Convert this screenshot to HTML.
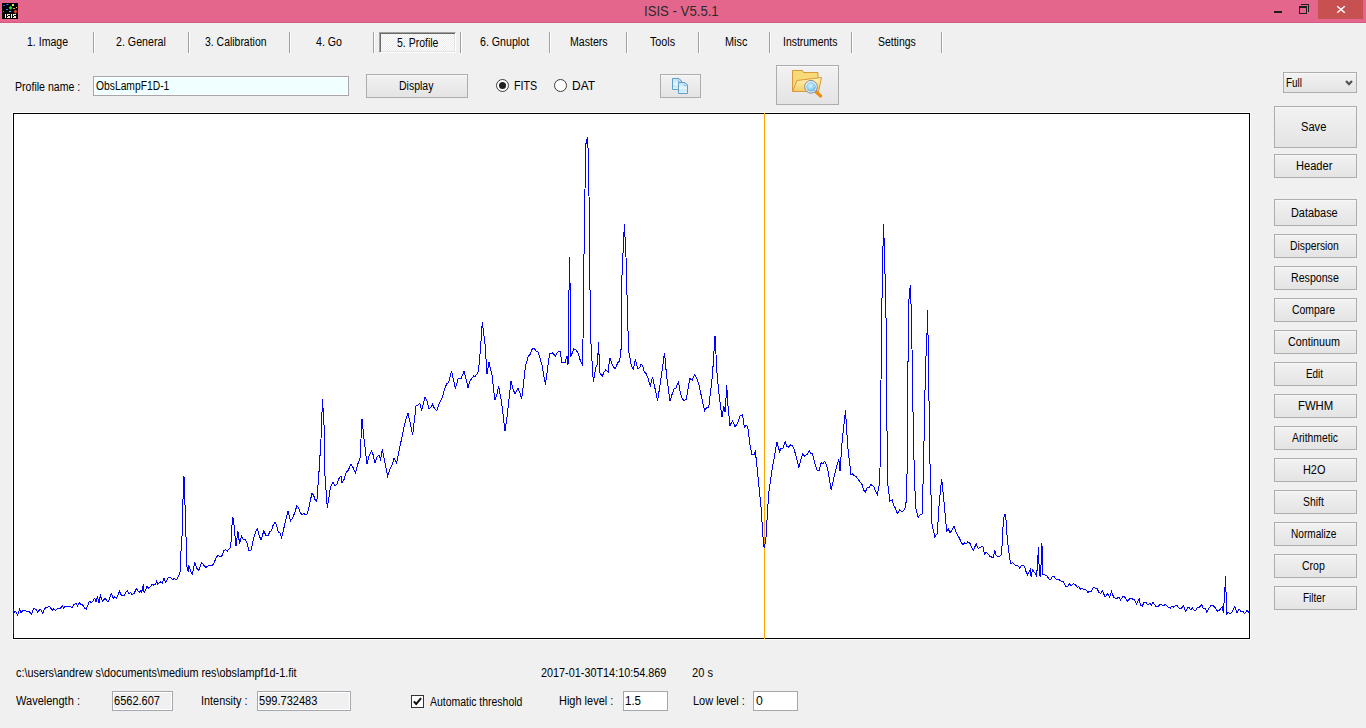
<!DOCTYPE html>
<html><head><meta charset="utf-8"><title>ISIS - V5.5.1</title>
<style>
html,body{margin:0;padding:0;width:1366px;height:728px;overflow:hidden;background:#F0F0F0;font-family:"Liberation Sans",sans-serif;font-size:12px;color:#000;}
.a{position:absolute;}
.t{position:absolute;white-space:pre;line-height:13px;height:13px;transform-origin:0 0;}
.btn{position:absolute;box-sizing:border-box;border:1px solid #ADADAD;background:linear-gradient(#F2F2F2,#E4E4E4);box-shadow:inset 0 1px 0 #F8F8F8;}
.sep{position:absolute;top:32px;width:1px;height:21px;background:#A0A0A0;box-shadow:1px 0 0 #FFF;}
.box{position:absolute;box-sizing:border-box;border:1px solid #A5A7AD;box-shadow:inset 0 0 0 1px #FFF;}
</style></head><body>
<!-- title bar -->
<div class="a" style="left:0;top:0;width:1366px;height:22px;background:#E5668D;"></div>
<div class="a" style="left:0;top:22px;width:1366px;height:1px;background:#D55A82;"></div>
<svg class="a" style="left:2px;top:3px" width="16" height="16" viewBox="0 0 16 16">
<rect width="16" height="16" fill="#000"/>
<rect x="1" y="2" width="2" height="1" fill="#1E5BFF"/><rect x="4.5" y="1" width="2" height="1" fill="#2A7BFF"/>
<rect x="10" y="1" width="2" height="2" fill="#D8F040"/><path d="M8.5 2.8l1.8 2-1.8 2.2-1.8-2.2z" fill="#22DD44"/>
<rect x="11" y="5" width="2" height="1" fill="#FFA020"/><rect x="14" y="4" width="1" height="1" fill="#FFE040"/>
<rect x="4" y="6" width="2" height="1" fill="#3A8CFF"/><rect x="1" y="8" width="1" height="1" fill="#9040FF"/>
<rect x="7" y="8" width="2" height="1" fill="#30D0FF"/><path d="M13.5 6.5l1.8 2-1.8 2.2-1.8-2.2z" fill="#FF4020"/>
<rect x="3" y="11" width="1" height="4" fill="#FFF4B8"/><rect x="5" y="11" width="3" height="1" fill="#FFF4B8"/><rect x="5" y="12" width="1" height="1" fill="#FFF4B8"/><rect x="6" y="13" width="1" height="1" fill="#FFF4B8"/><rect x="7" y="13" width="1" height="1" fill="#FFF4B8"/><rect x="5" y="14" width="3" height="1" fill="#FFF4B8"/><rect x="9" y="11" width="1" height="4" fill="#FFF4B8"/><rect x="11" y="11" width="3" height="1" fill="#FFF4B8"/><rect x="11" y="12" width="1" height="1" fill="#FFF4B8"/><rect x="12" y="13" width="1" height="1" fill="#FFF4B8"/><rect x="13" y="13" width="1" height="1" fill="#FFF4B8"/><rect x="11" y="14" width="3" height="1" fill="#FFF4B8"/>
</svg>
<div class="a" style="left:1274px;top:11px;width:8px;height:2px;background:#1E1E1E;"></div>
<div class="a" style="left:1301px;top:4px;width:7px;height:7px;border-top:1px solid #1E1E1E;border-right:1px solid #1E1E1E;"></div>
<div class="a" style="left:1299px;top:6px;width:6px;height:5px;border:1px solid #1E1E1E;border-top:2px solid #1E1E1E;background:#E5668D"></div>
<div class="a" style="left:1318px;top:0;width:45px;height:19px;background:#C75050;"></div>
<svg class="a" style="left:1336px;top:5px" width="10" height="9" viewBox="0 0 10 9"><path d="M1.2 1.2L8.8 7.8M8.8 1.2L1.2 7.8" stroke="#FFF" stroke-width="1.5"/></svg>

<!-- tab strip -->
<div class="sep" style="left:93px"></div>
<div class="sep" style="left:188px"></div>
<div class="sep" style="left:289px"></div>
<div class="sep" style="left:373px"></div>
<div class="sep" style="left:460px"></div>
<div class="sep" style="left:549px"></div>
<div class="sep" style="left:626px"></div>
<div class="sep" style="left:698px"></div>
<div class="sep" style="left:769px"></div>
<div class="sep" style="left:851px"></div>
<div class="sep" style="left:941px"></div>
<div class="a" style="left:379px;top:32px;width:77px;height:21px;box-sizing:border-box;border-top:1px solid #A0A0A0;border-left:1px solid #A0A0A0;border-right:1px solid #FFF;border-bottom:1px solid #FFF;background:repeating-conic-gradient(#FFF 0 25%,#EAEAEA 0 50%) 0 0/2px 2px;box-shadow:inset 1px 1px 0 #696969,inset -1px -1px 0 #E3E3E3"></div>

<!-- row 2 -->
<div class="box" style="left:93px;top:76px;width:256px;height:20px;background:#F0FFFF;"></div>
<div class="btn" style="left:366px;top:74px;width:102px;height:24px;"></div>
<div class="a" style="left:496px;top:79px;width:11px;height:11px;border-radius:50%;border:1px solid #3C3C3C;background:#FFF"></div>
<div class="a" style="left:499px;top:82px;width:7px;height:7px;border-radius:50%;background:#202020"></div>
<div class="a" style="left:554px;top:79px;width:11px;height:11px;border-radius:50%;border:1px solid #3C3C3C;background:#FFF"></div>
<div class="btn" style="left:660px;top:74px;width:41px;height:24px;"></div>
<svg class="a" style="left:671px;top:77px" width="18" height="17" viewBox="0 0 18 17">
<defs><linearGradient id="pg" x1="0" y1="0" x2="0" y2="1"><stop offset="0" stop-color="#C6E2F2"/><stop offset="0.55" stop-color="#E6F6FE"/><stop offset="0.7" stop-color="#C8E4F2"/><stop offset="1" stop-color="#E8F8FF"/></linearGradient></defs>
<path d="M1.5 1.5h6.5l2.5 2.5v8.5h-9z" fill="url(#pg)" stroke="#5E9ECB"/>
<circle cx="8.3" cy="3.7" r="1.1" fill="#F4FAFF" stroke="#5E9ECB" stroke-width="0.7"/>
<path d="M7.5 5.5h6.5l2.5 2.5v8.5h-9z" fill="url(#pg)" stroke="#5E9ECB"/>
<circle cx="14.3" cy="7.7" r="1.1" fill="#F4FAFF" stroke="#5E9ECB" stroke-width="0.7"/>
</svg>
<div class="btn" style="left:776px;top:65px;width:63px;height:40px;"></div>
<svg class="a" style="left:791px;top:69px" width="33" height="30" viewBox="0 0 33 30">
<defs><linearGradient id="fg" x1="0" y1="0" x2="0" y2="1"><stop offset="0" stop-color="#FFF2B8"/><stop offset="1" stop-color="#F6CF68"/></linearGradient>
<radialGradient id="lg" cx="0.45" cy="0.4" r="0.65"><stop offset="0" stop-color="#D8F4FF"/><stop offset="0.65" stop-color="#8ECDF0"/><stop offset="1" stop-color="#4C9CDA"/></radialGradient></defs>
<path d="M1.5 1.5h10l1 2h14.5v19h-25.5z" fill="#F7D978" stroke="#D8993A"/>
<path d="M1.5 22.5L6 11.5L30.5 8.5L27.5 22.5z" fill="url(#fg)" stroke="#D8993A"/>
<path d="M23.8 21.6l1.6 1.6" stroke="#8A95A2" stroke-width="3" stroke-linecap="round"/>
<path d="M26 23.8l3.6 3.2" stroke="#F08A10" stroke-width="3.2" stroke-linecap="round"/>
<circle cx="20" cy="17.8" r="6.3" fill="#F6F6F6" stroke="#707C8A" stroke-width="0.9"/>
<circle cx="20" cy="17.8" r="4.8" fill="url(#lg)"/>
</svg>
<div class="btn" style="left:1283px;top:72px;width:74px;height:21px;"></div>
<svg class="a" style="left:1345px;top:80px" width="8" height="6" viewBox="0 0 8 6"><path d="M1 1L4 4.3 7 1" fill="none" stroke="#505050" stroke-width="2.1"/></svg>

<!-- right buttons -->
<div class="btn" style="left:1274px;top:106px;width:83px;height:42px;"></div>
<div class="btn" style="left:1274px;top:154px;width:83px;height:24px;"></div>
<div class="btn" style="left:1274px;top:199px;width:83px;height:27px;"></div>
<div class="btn" style="left:1274px;top:234px;width:83px;height:24px;"></div>
<div class="btn" style="left:1274px;top:266px;width:83px;height:24px;"></div>
<div class="btn" style="left:1274px;top:298px;width:83px;height:24px;"></div>
<div class="btn" style="left:1274px;top:330px;width:83px;height:24px;"></div>
<div class="btn" style="left:1274px;top:362px;width:83px;height:24px;"></div>
<div class="btn" style="left:1274px;top:394px;width:83px;height:24px;"></div>
<div class="btn" style="left:1274px;top:426px;width:83px;height:24px;"></div>
<div class="btn" style="left:1274px;top:458px;width:83px;height:24px;"></div>
<div class="btn" style="left:1274px;top:490px;width:83px;height:24px;"></div>
<div class="btn" style="left:1274px;top:522px;width:83px;height:24px;"></div>
<div class="btn" style="left:1274px;top:554px;width:83px;height:24px;"></div>
<div class="btn" style="left:1274px;top:586px;width:83px;height:24px;"></div>

<!-- chart -->
<div class="a" style="left:12px;top:112px;width:1239px;height:528px;box-sizing:border-box;border:1px solid #FFF;"></div>
<div class="a" style="left:13px;top:113px;width:1237px;height:526px;box-sizing:border-box;border:1px solid #000;background:#FFF;"></div>
<svg class="a" style="left:0;top:0" width="1366" height="728" viewBox="0 0 1366 728">
<line x1="764.5" y1="113" x2="764.5" y2="639" stroke="#FFA500" stroke-width="1"/>
<polyline fill="none" stroke="#0000FF" stroke-width="1" shape-rendering="crispEdges" points="13.0,635.0 13.8,610.4 14.8,612.3 15.8,611.3 17.7,615.2 19.6,609.4 21.0,612.8 22.7,610.8 24.4,610.4 26.8,611.3 29.2,611.8 31.6,614.2 33.6,608.5 36.0,609.4 37.9,612.3 39.6,609.8 41.2,610.0 42.7,613.3 44.6,608.5 46.5,607.5 49.4,606.5 52.3,610.4 53.9,608.7 55.5,610.2 57.1,609.0 58.9,608.6 60.6,608.2 62.4,605.6 63.8,608.0 65.4,606.2 67.0,606.0 68.7,606.0 70.3,606.2 72.0,608.0 73.5,604.6 76.3,603.2 77.3,606.0 79.2,602.7 81.2,604.8 83.1,605.1 84.8,608.2 86.4,609.0 89.3,601.2 91.7,602.7 94.6,598.4 96.1,601.7 97.5,596.0 98.9,603.2 100.4,595.5 102.3,601.2 105.2,598.4 107.0,601.0 108.7,601.2 111.2,593.3 113.2,598.3 114.9,596.6 116.5,598.3 119.4,591.3 121.5,595.4 124.4,595.4 125.6,592.5 127.3,590.8 128.9,593.4 130.6,592.5 131.8,594.6 134.3,593.3 136.3,588.4 137.6,590.4 139.4,592.2 141.3,590.4 141.7,592.5 143.3,584.3 144.2,593.3 147.0,586.3 148.7,588.4 150.3,586.9 152.0,583.9 153.7,585.1 155.3,584.7 156.5,581.4 157.8,584.3 160.2,581.8 162.3,583.4 163.9,578.1 165.6,582.2 168.5,577.3 171.0,577.7 172.6,579.8 174.2,578.5 175.9,579.5 177.5,578.5 180.0,572.7 180.7,556.0 182.5,528.0 183.4,477.0 184.3,478.0 185.2,512.0 186.4,549.0 186.6,565.3 188.3,571.5 188.8,565.0 190.5,570.9 192.3,574.0 194.9,562.4 196.5,568.2 199.0,570.3 201.5,562.4 203.9,565.3 205.9,567.6 208.0,566.0 209.9,565.9 211.8,565.9 213.8,563.6 216.4,557.0 218.2,555.5 220.0,557.0 221.8,556.0 223.6,551.0 225.4,549.6 227.2,551.3 229.0,549.0 230.7,547.5 232.5,517.0 233.4,519.0 236.0,546.0 237.9,531.0 239.6,544.0 241.4,536.0 243.2,539.1 245.0,539.3 246.8,542.0 248.6,550.0 251.0,550.0 254.0,537.0 255.8,531.2 257.5,529.0 259.2,535.5 261.0,540.0 263.8,531.0 265.9,535.4 268.0,536.0 269.8,531.7 271.5,530.5 273.2,524.9 275.0,522.5 276.6,525.2 278.3,532.0 280.0,532.6 281.6,537.7 287.9,511.0 290.5,521.0 292.6,517.9 294.7,512.8 296.8,506.0 298.5,507.7 300.3,513.2 302.0,514.5 303.8,513.3 305.7,515.0 307.5,513.6 312.0,493.0 313.6,495.2 315.2,500.1 316.8,502.0 319.3,467.5 321.0,439.0 322.5,399.0 324.0,424.6 325.0,476.0 327.3,507.7 330.5,487.0 333.0,482.0 335.0,486.0 337.0,484.1 339.0,478.4 341.0,476.0 342.0,483.0 344.1,479.4 346.3,472.3 348.4,470.0 351.0,464.0 353.2,467.8 355.5,473.0 357.8,464.0 360.0,458.6 362.0,419.0 364.0,439.0 367.0,464.0 369.3,455.3 371.6,450.5 373.3,455.4 375.0,463.0 376.9,457.0 378.8,455.0 380.5,459.5 382.3,449.6 387.7,476.0 390.0,469.0 392.0,464.8 394.0,458.6 396.6,463.0 403.0,431.8 404.6,424.6 406.3,417.5 408.0,413.0 412.7,435.0 416.0,406.0 417.9,405.4 419.8,403.0 421.6,411.0 425.0,397.0 426.9,401.0 428.8,408.6 430.5,407.9 432.3,404.0 434.6,408.6 436.8,411.0 438.6,405.0 440.4,401.0 442.6,396.7 444.8,388.5 446.8,383.6 448.7,382.7 451.5,371.0 455.4,388.5 458.3,378.0 461.0,379.0 464.0,371.0 468.0,387.5 469.8,381.7 471.8,378.0 473.7,376.0 475.3,376.1 476.9,374.2 478.5,371.0 480.4,350.0 482.3,322.0 485.2,346.0 487.0,374.0 489.0,362.5 492.0,375.0 494.8,400.0 496.8,394.8 498.7,386.5 501.5,402.0 505.0,430.8 507.3,415.0 511.0,380.8 513.0,389.1 515.0,394.0 518.0,388.5 519.9,392.7 521.7,399.0 525.6,365.4 528.5,355.8 530.3,354.4 532.2,349.0 534.0,348.0 536.0,350.8 538.0,352.0 540.0,357.9 542.0,365.4 545.4,384.6 549.6,353.8 552.5,352.9 555.4,355.8 557.7,352.0 560.0,351.0 562.0,362.5 565.0,362.5 567.0,355.8 568.0,365.4 568.8,315.0 569.3,257.0 570.4,296.0 570.8,356.7 573.7,349.0 576.1,350.1 578.5,353.8 580.4,360.9 582.3,364.4 583.0,340.0 584.5,213.0 585.4,170.0 586.1,140.0 587.5,138.0 588.5,157.0 589.3,219.0 590.0,290.0 591.0,344.0 593.3,381.8 595.8,367.8 597.4,364.5 598.6,342.0 599.6,372.7 602.4,376.0 604.0,372.0 605.7,370.0 608.1,372.0 609.8,358.0 612.3,364.5 613.9,367.5 615.5,368.6 617.6,362.9 619.7,361.0 621.3,347.0 622.0,275.0 624.4,223.7 626.0,257.0 628.0,331.0 628.7,351.0 631.2,365.0 633.2,369.5 635.3,359.6 637.8,368.6 639.4,368.0 641.0,364.5 642.7,365.6 644.3,371.9 646.0,373.6 648.1,378.6 650.2,386.0 652.6,377.0 657.6,400.8 661.7,373.6 664.5,352.6 666.6,376.0 670.0,400.8 672.4,393.3 674.0,389.1 675.7,388.4 678.5,381.8 680.6,394.0 682.3,398.8 684.0,400.8 686.4,399.0 689.7,378.5 692.2,380.0 694.7,374.4 696.8,378.0 698.8,384.3 704.5,410.7 706.6,407.7 708.7,407.4 712.0,379.3 713.3,362.9 715.0,335.7 717.0,372.7 718.6,390.9 721.9,417.2 723.8,406.5 725.2,412.3 726.8,385.0 727.6,402.4 730.0,425.5 732.6,420.5 735.0,427.0 736.7,424.5 738.3,421.1 740.0,415.6 742.5,414.8 744.4,427.5 746.0,425.5 747.7,426.4 749.9,444.0 752.1,455.0 753.8,454.9 755.4,451.6 757.6,472.5 760.9,505.5 763.1,538.5 764.2,548.4 765.9,538.5 768.6,494.5 771.9,470.3 774.1,458.2 776.9,441.8 779.6,451.6 781.2,448.1 782.9,448.4 785.1,441.8 786.8,446.5 788.4,447.3 790.5,444.8 792.7,446.2 794.4,450.3 796.0,456.0 798.9,467.0 800.8,459.7 802.6,453.8 804.3,456.3 806.0,455.0 807.6,454.3 809.2,450.5 810.9,454.1 812.5,453.8 814.8,463.2 817.0,470.3 819.1,470.3 821.3,462.6 823.0,463.8 824.6,461.5 826.2,464.6 827.9,470.3 831.2,490.0 834.5,474.7 836.7,466.0 838.9,459.3 840.0,471.4 842.2,440.7 845.5,410.5 847.7,446.2 851.0,474.7 852.6,473.9 854.3,475.8 856.5,476.9 858.7,480.2 860.4,482.5 862.0,484.5 863.6,490.0 865.3,492.3 867.1,488.0 869.0,487.9 870.8,484.6 873.7,486.4 875.5,491.4 877.4,494.5 879.4,484.0 880.0,469.0 881.4,346.0 882.4,269.4 883.6,224.3 884.8,264.4 886.3,331.0 886.8,417.0 887.8,484.0 889.8,501.0 892.3,500.0 893.9,505.9 895.6,508.3 897.2,513.6 899.7,510.0 901.5,511.7 903.4,511.0 905.9,506.0 907.1,471.5 908.3,327.5 909.0,299.0 910.3,285.0 911.3,311.4 912.5,375.7 913.3,432.0 914.5,479.0 915.8,508.6 918.2,517.3 920.1,514.6 922.0,514.8 923.2,479.0 924.4,423.3 925.4,369.5 926.9,337.4 927.6,310.2 928.9,388.0 929.4,444.3 931.9,523.5 934.8,537.0 937.3,533.4 939.3,501.2 941.7,479.0 943.7,498.8 946.7,530.9 948.3,529.1 950.0,532.7 951.6,530.9 954.1,526.0 956.0,532.3 957.8,535.9 959.5,538.0 961.1,542.6 962.8,544.5 964.4,543.0 966.1,543.9 967.7,542.0 970.0,543.3 971.7,547.7 973.4,550.1 976.2,544.0 978.2,548.8 980.6,547.1 983.0,546.7 984.4,554.3 986.1,552.3 987.9,553.6 989.7,556.2 991.6,557.1 993.4,557.7 994.7,550.1 996.1,555.0 997.8,556.9 999.5,556.3 1001.6,554.3 1003.0,527.5 1004.3,514.4 1005.7,515.0 1006.8,533.0 1008.5,549.5 1010.5,563.9 1012.6,562.5 1015.3,565.3 1017.4,565.1 1019.5,568.0 1021.9,565.2 1024.3,566.0 1026.0,571.6 1027.7,574.9 1030.4,569.4 1031.1,577.0 1032.5,570.0 1034.5,572.4 1036.6,576.2 1037.6,562.5 1038.4,547.4 1039.4,574.2 1040.8,577.0 1041.4,543.3 1042.5,547.4 1042.8,574.2 1044.9,574.9 1047.0,576.1 1049.0,579.0 1050.7,579.4 1052.4,576.2 1054.2,576.7 1055.9,579.0 1058.3,579.2 1060.7,581.0 1063.4,581.7 1065.5,586.1 1067.5,586.5 1069.3,583.6 1071.2,585.8 1073.0,583.8 1075.1,584.2 1077.2,587.2 1078.9,586.6 1080.6,589.6 1082.3,588.1 1084.0,590.0 1085.8,589.4 1087.7,592.4 1089.5,591.4 1091.3,591.8 1093.2,587.3 1095.0,588.0 1097.0,588.4 1099.1,592.7 1100.7,593.2 1102.3,590.6 1105.1,597.1 1107.4,593.7 1109.7,597.1 1111.4,591.4 1113.7,597.1 1116.6,598.8 1118.8,597.1 1120.6,600.0 1122.8,596.5 1125.1,597.2 1127.4,601.1 1129.7,598.6 1132.0,598.8 1134.2,599.7 1136.5,604.0 1139.4,598.8 1140.5,605.7 1142.2,606.1 1144.0,602.5 1145.7,602.3 1148.0,605.1 1149.7,603.1 1151.4,605.0 1153.1,602.3 1156.0,606.8 1158.0,607.0 1160.0,604.0 1162.8,605.7 1165.7,604.5 1168.5,607.4 1170.2,608.3 1172.0,605.9 1173.7,607.1 1175.4,605.7 1177.1,605.2 1178.8,608.0 1181.1,608.8 1183.4,605.7 1185.7,611.4 1187.3,608.1 1189.0,607.4 1190.7,609.6 1192.5,608.1 1194.2,610.5 1195.9,610.3 1197.8,607.0 1199.7,607.1 1201.6,604.5 1203.3,608.6 1205.1,608.5 1206.8,612.0 1209.0,608.0 1211.0,605.6 1213.0,605.7 1215.3,607.7 1217.6,611.4 1219.9,609.7 1222.2,606.8 1223.3,612.5 1224.5,597.1 1225.6,576.0 1226.2,598.8 1226.5,615.4 1227.9,612.0 1230.2,613.7 1232.5,611.4 1234.8,606.8 1237.0,612.5 1239.3,609.1 1241.0,611.5 1242.8,611.3 1244.5,613.7 1247.3,610.3 1249.0,613.0"/>
</svg>

<!-- bottom -->
<div class="box" style="left:112px;top:691px;width:61px;height:20px;"></div>
<div class="box" style="left:257px;top:691px;width:94px;height:20px;"></div>
<div class="a" style="left:411px;top:695px;width:13px;height:13px;box-sizing:border-box;border:1px solid #333;background:#FFF"></div>
<svg class="a" style="left:411px;top:695px" width="13" height="13" viewBox="0 0 13 13"><path d="M2.8 6.3l2.4 2.7 4.9-5.8" fill="none" stroke="#111" stroke-width="2"/></svg>
<div class="box" style="left:623px;top:691px;width:45px;height:20px;background:#FFF"></div>
<div class="box" style="left:753px;top:691px;width:45px;height:20px;background:#FFF"></div>
<div class="t" style="left:644px;top:1px;font-size:15.5px;line-height:19px;height:19px;color:#2B2B2B;transform:scaleX(0.85)">ISIS - V5.5.1</div>
<div class="t" style="left:26.82px;top:36px;transform:scaleX(0.8778);">1. Image</div>
<div class="t" style="left:116.11px;top:36px;transform:scaleX(0.8889);">2. General</div>
<div class="t" style="left:205.13px;top:36px;transform:scaleX(0.8696);">3. Calibration</div>
<div class="t" style="left:315.70px;top:36px;transform:scaleX(0.8862);">4. Go</div>
<div class="t" style="left:396.93px;top:37px;transform:scaleX(0.8739);">5. Profile</div>
<div class="t" style="left:480.01px;top:36px;transform:scaleX(0.8870);">6. Gnuplot</div>
<div class="t" style="left:569.62px;top:36px;transform:scaleX(0.8805);">Masters</div>
<div class="t" style="left:650.00px;top:36px;transform:scaleX(0.8929);">Tools</div>
<div class="t" style="left:724.50px;top:36px;transform:scaleX(0.9043);">Misc</div>
<div class="t" style="left:783.13px;top:36px;transform:scaleX(0.8689);">Instruments</div>
<div class="t" style="left:877.53px;top:36px;transform:scaleX(0.8714);">Settings</div>
<div class="t" style="left:15.42px;top:81px;transform:scaleX(0.8806);">Profile name :</div>
<div class="t" style="left:95.70px;top:80px;transform:scaleX(0.8588);">ObsLampF1D-1</div>
<div class="t" style="left:398.52px;top:80px;transform:scaleX(0.8763);">Display</div>
<div class="t" style="left:514.21px;top:80px;transform:scaleX(0.8920);">FITS</div>
<div class="t" style="left:572.00px;top:80px;transform:scaleX(1.0000);">DAT</div>
<div class="t" style="left:1286.47px;top:77px;transform:scaleX(0.8278);">Full</div>
<div class="t" style="left:1301.17px;top:121px;transform:scaleX(0.9269);">Save</div>
<div class="t" style="left:1296.08px;top:160px;transform:scaleX(0.9237);">Header</div>
<div class="t" style="left:1291.29px;top:207px;transform:scaleX(0.9080);">Database</div>
<div class="t" style="left:1289.74px;top:240px;transform:scaleX(0.8618);">Dispersion</div>
<div class="t" style="left:1290.52px;top:272px;transform:scaleX(0.8849);">Response</div>
<div class="t" style="left:1292.33px;top:304px;transform:scaleX(0.8708);">Compare</div>
<div class="t" style="left:1288.30px;top:336px;transform:scaleX(0.8964);">Continuum</div>
<div class="t" style="left:1305.58px;top:368px;transform:scaleX(0.8250);">Edit</div>
<div class="t" style="left:1297.76px;top:400px;transform:scaleX(0.9429);">FWHM</div>
<div class="t" style="left:1291.80px;top:432px;transform:scaleX(0.8623);">Arithmetic</div>
<div class="t" style="left:1303.09px;top:464px;transform:scaleX(0.9087);">H2O</div>
<div class="t" style="left:1303.13px;top:496px;transform:scaleX(0.8652);">Shift</div>
<div class="t" style="left:1291.46px;top:528px;transform:scaleX(0.8415);">Normalize</div>
<div class="t" style="left:1302.12px;top:560px;transform:scaleX(0.8760);">Crop</div>
<div class="t" style="left:1303.17px;top:592px;transform:scaleX(0.8346);">Filter</div>
<div class="t" style="left:16.20px;top:667px;transform:scaleX(0.9029);">c:\users\andrew s\documents\medium res\obslampf1d-1.fit</div>
<div class="t" style="left:541.00px;top:667px;transform:scaleX(0.9036);">2017-01-30T14:10:54.869</div>
<div class="t" style="left:692.08px;top:667px;transform:scaleX(0.9238);">20 s</div>
<div class="t" style="left:16.40px;top:695px;transform:scaleX(0.9188);">Wavelength :</div>
<div class="t" style="left:114.38px;top:695px;transform:scaleX(0.9184);">6562.607</div>
<div class="t" style="left:200.59px;top:695px;transform:scaleX(0.9061);">Intensity :</div>
<div class="t" style="left:258.78px;top:695px;transform:scaleX(0.9210);">599.732483</div>
<div class="t" style="left:430.00px;top:696px;transform:scaleX(0.8708);">Automatic threshold</div>
<div class="t" style="left:559.39px;top:695px;transform:scaleX(0.9140);">High level :</div>
<div class="t" style="left:625.34px;top:695px;transform:scaleX(0.9600);">1.5</div>
<div class="t" style="left:693.09px;top:695px;transform:scaleX(0.9127);">Low level :</div>
<div class="t" style="left:755.50px;top:695px;transform:scaleX(1.0167);">0</div>
</body></html>
